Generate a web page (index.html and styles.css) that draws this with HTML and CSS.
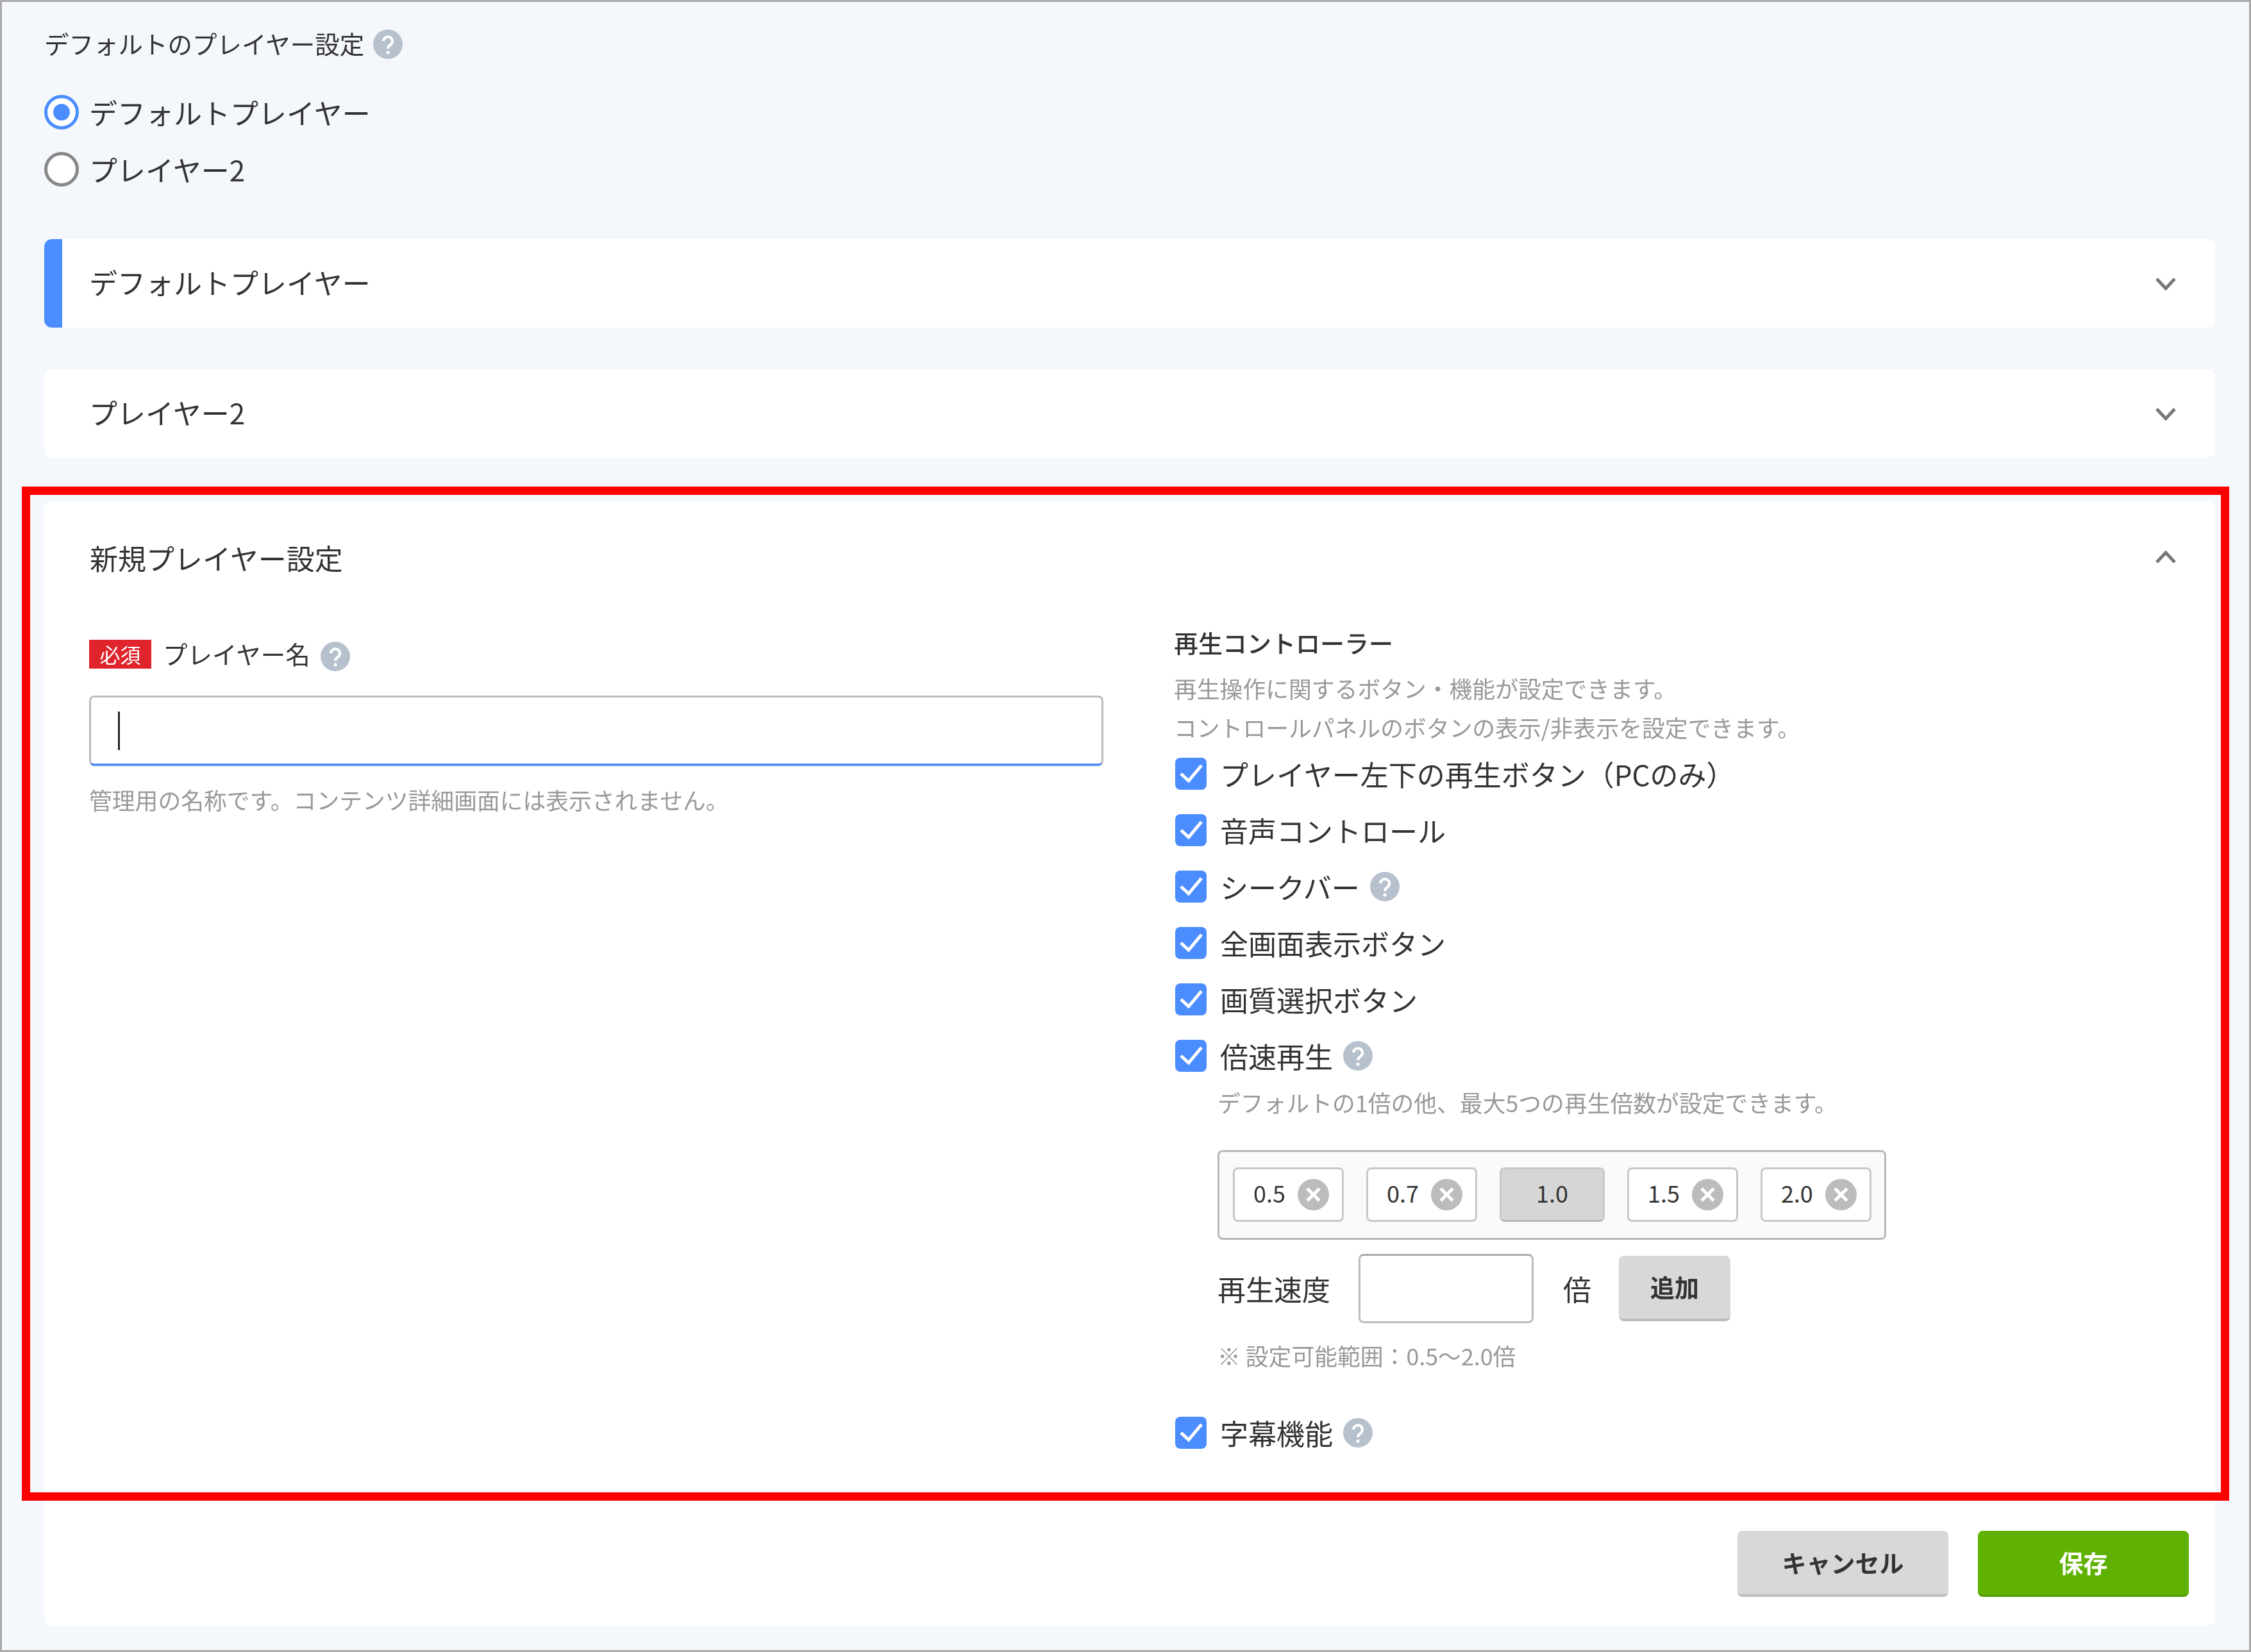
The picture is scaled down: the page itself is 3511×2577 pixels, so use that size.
FILE: index.html
```html
<!DOCTYPE html>
<html lang="ja">
<head>
<meta charset="utf-8">
<title>デフォルトのプレイヤー設定</title>
<link rel="stylesheet" href="styles.css">
</head>
<body>
<svg class="defs" aria-hidden="true">
  <symbol id="i-help" viewBox="0 0 46 46"><circle cx="23" cy="23" r="23" fill="#b7c0cd"/><path d="M16 18a7 7 0 1 1 11 6c-2.500 1.700-4 2.800-4 6" fill="none" stroke="#fff" stroke-width="4"/><circle cx="23" cy="36" r="2.600" fill="#fff"/></symbol>
  <symbol id="i-check" viewBox="0 0 49 50"><rect width="49" height="50" rx="8" fill="#4b8dff"/><path d="M9 25l12 11L41 12" fill="none" stroke="#fff" stroke-width="5"/></symbol>
  <symbol id="i-x" viewBox="0 0 49 49"><circle cx="24.500" cy="24.500" r="24.500" fill="#bcbcbc"/><path d="M15 15l19 19M34 15L15 34" fill="none" stroke="#fff" stroke-width="5"/></symbol>
  <symbol id="i-down" viewBox="0 0 32 21"><path d="M2 3l14 15L30 3" fill="none" stroke="#777" stroke-width="5"/></symbol>
  <symbol id="i-up" viewBox="0 0 32 21"><path d="M2 18L16 3l14 15" fill="none" stroke="#777" stroke-width="5"/></symbol>
</svg>
<main class="page">
  <div class="soft">
    <div class="section-title"><span>デフォルトのプレイヤー設定</span><svg class="help"><use href="#i-help"/></svg></div>
    <div class="radios">
      <div class="radio-row"><span class="radio radio-on"></span><span>デフォルトプレイヤー</span></div>
      <div class="radio-row"><span class="radio"></span><span>プレイヤー2</span></div>
    </div>
    <div class="accordion accordion-active"><span>デフォルトプレイヤー</span><svg class="chevron"><use href="#i-down"/></svg></div>
    <div class="accordion accordion-second"><span>プレイヤー2</span><svg class="chevron"><use href="#i-down"/></svg></div>
    <section class="panel">
      <header class="panel-head"><span>新規プレイヤー設定</span><svg class="chevron"><use href="#i-up"/></svg></header>
      <div class="columns">
        <div class="col-left">
          <div class="field-label"><span class="badge">必須</span><span class="field-name">プレイヤー名</span><svg class="help"><use href="#i-help"/></svg></div>
          <div class="name-input"><span class="caret"></span></div>
          <p class="hint hint-name">管理用の名称です。コンテンツ詳細画面には表示されません。</p>
        </div>
        <div class="col-right">
          <h2 class="controls-title">再生コントローラー</h2>
          <p class="hint controls-desc">再生操作に関するボタン・機能が設定できます。<br>コントロールパネルのボタンの表示/非表示を設定できます。</p>
          <div class="checks">
            <div class="check-row"><svg class="check"><use href="#i-check"/></svg><span>プレイヤー左下の再生ボタン（PCのみ）</span></div>
            <div class="check-row"><svg class="check"><use href="#i-check"/></svg><span>音声コントロール</span></div>
            <div class="check-row"><svg class="check"><use href="#i-check"/></svg><span>シークバー</span><svg class="help"><use href="#i-help"/></svg></div>
            <div class="check-row"><svg class="check"><use href="#i-check"/></svg><span>全画面表示ボタン</span></div>
            <div class="check-row"><svg class="check"><use href="#i-check"/></svg><span>画質選択ボタン</span></div>
            <div class="check-row"><svg class="check"><use href="#i-check"/></svg><span>倍速再生</span><svg class="help"><use href="#i-help"/></svg></div>
          </div>
          <div class="speed">
            <p class="hint speed-desc">デフォルトの1倍の他、最大5つの再生倍数が設定できます。</p>
            <div class="chips">
              <div class="chip"><span>0.5</span><svg class="chip-x"><use href="#i-x"/></svg></div>
              <div class="chip"><span>0.7</span><svg class="chip-x"><use href="#i-x"/></svg></div>
              <div class="chip chip-fixed"><span>1.0</span></div>
              <div class="chip"><span>1.5</span><svg class="chip-x"><use href="#i-x"/></svg></div>
              <div class="chip"><span>2.0</span><svg class="chip-x"><use href="#i-x"/></svg></div>
            </div>
            <div class="speed-row">
              <span class="speed-label">再生速度</span>
              <div class="speed-input"></div>
              <span class="speed-unit">倍</span>
              <button class="btn btn-add" type="button">追加</button>
            </div>
            <p class="hint speed-note">※ 設定可能範囲：0.5～2.0倍</p>
          </div>
          <div class="check-row check-row-last"><svg class="check"><use href="#i-check"/></svg><span>字幕機能</span><svg class="help"><use href="#i-help"/></svg></div>
        </div>
      </div>
      <footer class="actions">
        <button class="btn btn-cancel" type="button">キャンセル</button>
        <button class="btn btn-save" type="button">保存</button>
      </footer>
    </section>
  </div>
  <div class="highlight"></div>
</main>
</body>
</html>
```
FILE: styles.css
```css
* { box-sizing: border-box; }
html, body { margin: 0; padding: 0; }
body {
  font-family: "Noto Sans CJK JP", "Noto Sans", sans-serif;
  color: #333;
  background: #fff;
}
.defs { display: none; }
.page {
  position: relative;
  width: 3511px;
  height: 2577px;
  border: 3px solid #aaa;
  padding: 0 53px 0 66px;
  background: #f4f7fc;
  overflow: hidden;
}
.soft { filter: blur(0.7px); padding-top: 1px; margin-top: -1px; }
.section-title {
  display: flex;
  align-items: center;
  gap: 14px;
  height: 46px;
  margin-top: 43px;
  font-size: 38.500px;
  line-height: 46px;
}
.section-title span { margin-bottom: 4px; }
.help { width: 46px; height: 46px; flex: none; }
.radios {
  display: flex;
  flex-direction: column;
  gap: 35px;
  margin-top: 56px;
}
.radio-row {
  display: flex;
  align-items: center;
  gap: 16px;
  height: 54px;
  font-size: 44px;
}
.radio {
  width: 54px;
  height: 54px;
  border: 5px solid #888;
  border-radius: 50%;
  background: #fff;
  display: flex;
  align-items: center;
  justify-content: center;
}
.radio-on { border-color: #4b8dff; }
.radio-on::after {
  content: "";
  width: 26px;
  height: 26px;
  border-radius: 50%;
  background: #4b8dff;
}
.accordion {
  display: flex;
  align-items: center;
  justify-content: space-between;
  height: 138px;
  padding: 0 61px 0 70px;
  background: #fff;
  border-radius: 12px;
  font-size: 44px;
}
.accordion span { margin-bottom: 4px; }
.accordion-active {
  margin-top: 82px;
  padding-left: 42px;
  border-left: 28px solid #4b8dff;
}
.accordion-second { margin-top: 65px; }
.chevron { width: 32px; height: 21px; flex: none; }
.panel {
  margin-top: 68px;
  background: #fff;
  border-radius: 12px;
}
.panel-head {
  display: flex;
  align-items: center;
  justify-content: space-between;
  height: 180px;
  padding: 0 61px 0 71px;
  font-size: 44px;
}
.panel-head span { margin-bottom: 4px; }
.panel-head .chevron { margin-bottom: 6px; }
.columns {
  display: grid;
  grid-template-columns: 1582px 1fr;
  column-gap: 112px;
  padding: 21px 61px 0 70px;
}
.col-left { padding-top: 13px; }
.field-label {
  display: flex;
  align-items: center;
  height: 49px;
  font-size: 38.500px;
}
.badge {
  width: 97px;
  height: 45px;
  margin-right: 18px;
  background: #e0242c;
  color: #fff;
  font-size: 32px;
  line-height: 45px;
  text-align: center;
}
.field-name { margin-bottom: 4px; }
.field-label .help { margin: 6px 0 0 16px; }
.name-input {
  display: flex;
  align-items: center;
  height: 110px;
  margin-top: 40px;
  padding-left: 42px;
  background: #fff;
  border: 3px solid #bbb;
  border-bottom: 4px solid #5b8fee;
  border-radius: 8px;
}
.caret { width: 3px; height: 60px; background: #222; }
.hint { margin: 0; color: #999; font-size: 35.800px; }
.hint-name { margin-top: 30px; line-height: 44px; }
.controls-title {
  margin: -4px 0 0 -2px;
  font-size: 38px;
  font-weight: 500;
  line-height: 46px;
}
.controls-desc { margin: 18px 0 0 -2px; line-height: 61px; }
.checks {
  display: flex;
  flex-direction: column;
  gap: 38px;
  margin-top: 17px;
}
.check-row {
  display: flex;
  align-items: center;
  height: 50px;
  font-size: 44px;
  white-space: nowrap;
}
.check { width: 49px; height: 50px; margin-right: 21px; flex: none; }
.check-row .help { margin-left: 16px; }
.speed { padding-left: 66px; }
.speed-desc { margin-top: 22px; line-height: 50px; }
.chips {
  display: flex;
  gap: 35px;
  width: 1043px;
  height: 140px;
  margin-top: 50px;
  padding: 24px 21px 0;
  background: #fafafa;
  border: 3px solid #b8b8b8;
  border-radius: 8px;
}
.chip {
  display: flex;
  align-items: center;
  gap: 19px;
  height: 85px;
  padding: 0 20px 0 29px;
  background: #fff;
  border: 3px solid #c8c8c8;
  border-radius: 8px;
  font-size: 36px;
}
.chip span { margin-bottom: 8px; }
.chip-fixed {
  padding: 0 54px;
  background: #d6d6d6;
  border-bottom-color: #b8b8b8;
}
.chip-x { width: 49px; height: 49px; flex: none; }
.speed-row {
  display: flex;
  align-items: center;
  margin-top: 22px;
  font-size: 44px;
}
.speed-label { flex: none; width: 172px; margin-right: 48px; white-space: nowrap; }
.speed-input {
  flex: none;
  width: 273px;
  height: 108px;
  background: #fff;
  border: 3px solid #bbb;
  border-top-color: #aaa;
  border-radius: 8px;
}
.speed-unit { margin: 0 43px 0 46px; }
.btn {
  display: block;
  padding: 0 0 3px;
  background: #d8d8d8;
  color: #333;
  border: 0;
  border-bottom: 4px solid #bdbdbd;
  border-radius: 8px;
  font-family: inherit;
  font-size: 38px;
  font-weight: 700;
}
.btn-add { width: 174px; height: 102px; }
.speed-note { margin-top: 28px; line-height: 44px; }
.check-row-last { margin-top: 74px; }
.actions {
  display: flex;
  justify-content: flex-end;
  gap: 46px;
  margin-top: 128px;
  padding: 0 41px 45px 0;
}
.btn-cancel, .btn-save { width: 329px; height: 103px; }
.btn-save {
  background: #5fb204;
  border-bottom-color: #549e03;
  color: #fff;
}
.highlight {
  position: absolute;
  left: 31px;
  top: 756px;
  width: 3443px;
  height: 1582px;
  border: 13px solid #f00;
  pointer-events: none;
}
```
